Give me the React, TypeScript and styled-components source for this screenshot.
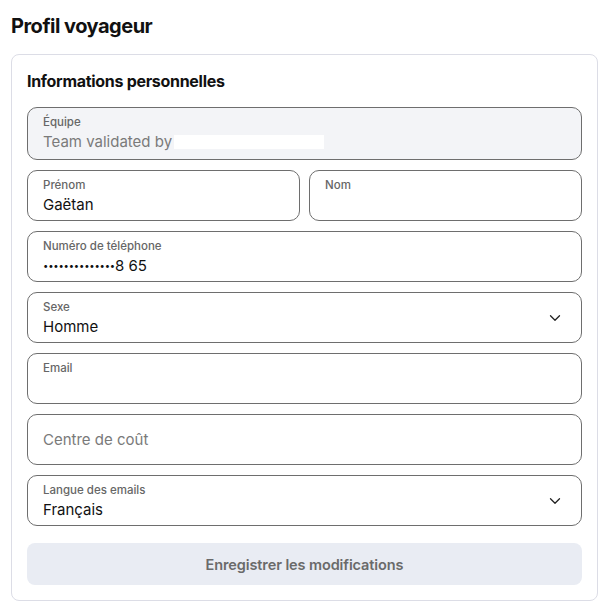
import React from "react";
import styled, { createGlobalStyle } from "styled-components";

const Global = createGlobalStyle`
  html, body { margin: 0; padding: 0; background: #ffffff; }
  body { font-family: Inter, "Noto Sans", "Liberation Sans", sans-serif; color: #111; }
  * { box-sizing: border-box; }
`;

const Page = styled.div`
  padding: 13px 14px 8px 11px;
  display: flex;
  flex-direction: column;
`;

const Title = styled.h1`
  margin: 0 0 15px 0;
  font-size: 20px;
  line-height: 26px;
  font-weight: 700;
  letter-spacing: -0.5px;
  color: #111;
`;

const Card = styled.section`
  border: 1px solid #dcdde6;
  border-radius: 8px;
  padding: 15px 15px 15px 15px;
  display: flex;
  flex-direction: column;
  gap: 10px;
`;

const CardTitle = styled.h2`
  margin: 0 0 5px 0;
  font-size: 16px;
  line-height: 22px;
  font-weight: 700;
  letter-spacing: -0.3px;
  color: #111;
`;

const Row = styled.div`
  display: grid;
  grid-template-columns: 1fr 1fr;
  gap: 9px;
`;

const Field = styled.div<{ $disabled?: boolean; $center?: boolean }>`
  position: relative;
  height: ${(p) => (p.$disabled ? "53px" : "51px")};
  border: 1px solid #6e6e6e;
  border-radius: 10px;
  background: ${(p) => (p.$disabled ? "#f3f4f7" : "#fff")};
  padding: ${(p) => (p.$center ? "0 40px 0 15px" : "6px 40px 0 15px")};
  display: flex;
  flex-direction: column;
  justify-content: ${(p) => (p.$center ? "center" : "flex-start")};
`;

const Label = styled.div`
  font-size: 11.5px;
  line-height: 16px;
  color: #666;
  font-weight: 500;
`;

const Value = styled.div<{ $muted?: boolean; $solo?: boolean }>`
  margin-top: ${(p) => (p.$solo ? "0" : "2px")};
  font-size: 15px;
  line-height: 20px;
  color: ${(p) => (p.$muted ? "#7a7a7a" : "#111")};
  display: flex;
  align-items: center;
  white-space: nowrap;
`;

const Dots = styled.span`
  font-size: 9.5px;
  letter-spacing: -0.2px;
`;

const Redacted = styled.span`
  display: inline-block;
  width: 150px;
  height: 14px;
  background: #fff;
  margin-left: 2px;
`;

const Chevron = styled.svg`
  position: absolute;
  right: 20px;
  top: 50%;
  transform: translateY(-50%);
`;

const SaveButton = styled.button`
  margin-top: 7px;
  height: 42px;
  border: none;
  border-radius: 8px;
  background: #e9ecf3;
  color: #6a6a6a;
  font-family: inherit;
  font-size: 14.5px;
  font-weight: 600;
  letter-spacing: -0.1px;
  cursor: not-allowed;
`;

const ChevronIcon = () => (
  <Chevron width="12" height="8" viewBox="0 0 12 8" fill="none">
    <path d="M1.5 1.8 L6 6.2 L10.5 1.8" stroke="#222" strokeWidth="1.3" strokeLinecap="round" strokeLinejoin="round" />
  </Chevron>
);

export default function App() {
  return (
    <>
      <Global />
      <Page>
        <Title>Profil voyageur</Title>
        <Card>
          <CardTitle>Informations personnelles</CardTitle>
          <Field $disabled>
            <Label>Équipe</Label>
            <Value $muted>
              Team validated by<Redacted />
            </Value>
          </Field>
          <Row>
            <Field>
              <Label>Prénom</Label>
              <Value>Gaëtan</Value>
            </Field>
            <Field>
              <Label>Nom</Label>
              <Value></Value>
            </Field>
          </Row>
          <Field>
            <Label>Numéro de téléphone</Label>
            <Value>
              <Dots>••••••••••••••</Dots>8 65
            </Value>
          </Field>
          <Field>
            <Label>Sexe</Label>
            <Value>Homme</Value>
            <ChevronIcon />
          </Field>
          <Field>
            <Label>Email</Label>
            <Value></Value>
          </Field>
          <Field $center>
            <Value $muted $solo>Centre de coût</Value>
          </Field>
          <Field>
            <Label>Langue des emails</Label>
            <Value>Français</Value>
            <ChevronIcon />
          </Field>
          <SaveButton disabled>Enregistrer les modifications</SaveButton>
        </Card>
      </Page>
    </>
  );
}
